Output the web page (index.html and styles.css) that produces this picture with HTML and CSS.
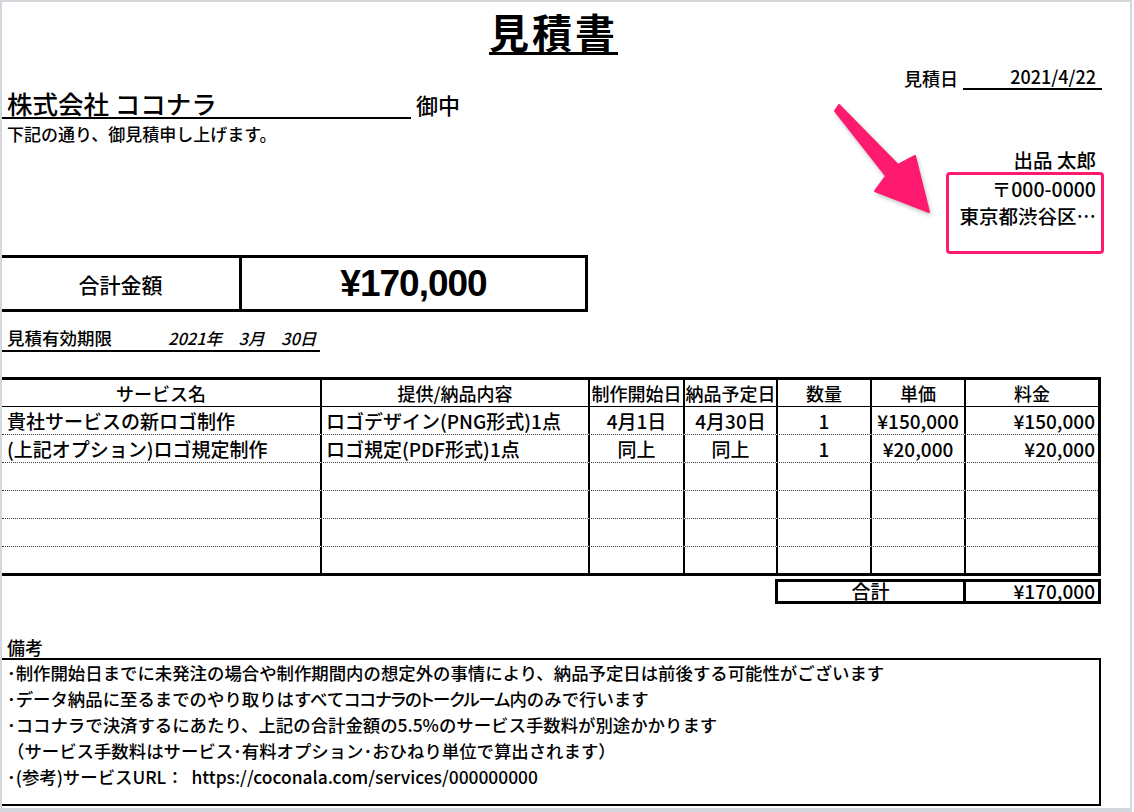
FILE: index.html
```html
<!DOCTYPE html>
<html lang="ja">
<head>
<meta charset="utf-8">
<title>見積書</title>
<link rel="stylesheet" href="styles.css">
</head>
<body>
<div class="frame">
  <div class="doc">
    <div class="title-row"><h1 class="title">見積書</h1></div>

    <div class="head">
      <div class="client">
        <div class="client-line"><span class="client-name">株式会社 ココナラ</span><span class="onchu">御中</span></div>
        <p class="lead">下記の通り、御見積申し上げます。</p>
      </div>
      <div class="issuer">
        <div class="date-row"><span class="date-label">見積日</span><span class="date-val">2021/4/22</span></div>
        <div class="issuer-name">出品 太郎</div>
        <div class="highlight">
          <div>〒000-0000</div>
          <div>東京都渋谷区…</div>
        </div>
      </div>
    </div>

    <div class="total-box">
      <div class="total-label">合計金額</div>
      <div class="total-amount">¥170,000</div>
    </div>

    <div class="valid"><span class="valid-label">見積有効期限</span><span class="valid-date">2021年　3月　30日</span></div>

    <div class="items">
      <div class="row head-row">
        <div class="cell">サービス名</div>
        <div class="cell">提供/納品内容</div>
        <div class="cell">制作開始日</div>
        <div class="cell">納品予定日</div>
        <div class="cell">数量</div>
        <div class="cell">単価</div>
        <div class="cell">料金</div>
      </div>
      <div class="row">
        <div class="cell l1">貴社サービスの新ロゴ制作</div>
        <div class="cell l2">ロゴデザイン(PNG形式)1点</div>
        <div class="cell c">4月1日</div>
        <div class="cell c">4月30日</div>
        <div class="cell c">1</div>
        <div class="cell c">¥150,000</div>
        <div class="cell r">¥150,000</div>
      </div>
      <div class="row">
        <div class="cell l1">(上記オプション)ロゴ規定制作</div>
        <div class="cell l2">ロゴ規定(PDF形式)1点</div>
        <div class="cell c">同上</div>
        <div class="cell c">同上</div>
        <div class="cell c">1</div>
        <div class="cell c">¥20,000</div>
        <div class="cell r">¥20,000</div>
      </div>
      <div class="row"><div class="cell"></div><div class="cell"></div><div class="cell"></div><div class="cell"></div><div class="cell"></div><div class="cell"></div><div class="cell"></div></div>
      <div class="row"><div class="cell"></div><div class="cell"></div><div class="cell"></div><div class="cell"></div><div class="cell"></div><div class="cell"></div><div class="cell"></div></div>
      <div class="row"><div class="cell"></div><div class="cell"></div><div class="cell"></div><div class="cell"></div><div class="cell"></div><div class="cell"></div><div class="cell"></div></div>
      <div class="row last"><div class="cell"></div><div class="cell"></div><div class="cell"></div><div class="cell"></div><div class="cell"></div><div class="cell"></div><div class="cell"></div></div>
    </div>

    <div class="subtotal">
      <div class="sub-label">合計</div>
      <div class="sub-amount">¥170,000</div>
    </div>

    <div class="notes-title">備考</div>
    <div class="notes">
      <p>･制作開始日までに未発注の場合や制作期間内の想定外の事情により、納品予定日は前後する可能性がございます</p>
      <p>･データ納品に至るまでのやり取りはすべて<span class="tight">ココナラのトークルーム</span>内のみで行います</p>
      <p>･ココナラで決済するにあたり、上記の合計金額の5.5%のサービス手数料が別途かかります</p>
      <p>（サービス手数料はサービス･有料オプション･おひねり単位で算出されます）</p>
      <p>･(参考)サービスURL：  https://coconala.com/services/000000000</p>
    </div>
  </div>

  <svg class="arrow" width="1134" height="812" viewBox="0 0 1134 812" aria-hidden="true">
    <polygon points="839,105 898,165 915,156 929,212 875,191 886,176 835,111" fill="#fd1a6f" stroke="#fd1a6f" stroke-width="2" stroke-linejoin="round"/>
  </svg>
</div>
</body>
</html>
```

FILE: styles.css
```css
* { box-sizing: border-box; }

html, body {
  margin: 0;
  padding: 0;
  background: #ffffff;
}

body {
  font-family: "Noto Sans CJK JP", "Noto Sans", sans-serif;
  font-weight: 500;
  color: #000;
}

.frame {
  position: relative;
  width: 1132px;
  height: 812px;
  border-style: solid;
  border-color: #d4d8dc;
  border-width: 2px 2px 4px 2px;
  overflow: hidden;
  background: #fff;
}

.doc {
  width: 1100px;
}

/* title */
.title-row {
  height: 62px;
  text-align: center;
}
.title {
  margin: 0;
  padding-left: 3px;
  font-size: 40px;
  line-height: 58px;
  letter-spacing: 3px;
  font-weight: 700;
  text-decoration: underline;
  text-decoration-thickness: 3px;
  text-underline-offset: 4px;
}

/* header block */
.head {
  display: flex;
  justify-content: space-between;
}
.client {
  padding-top: 24px;
}
.client-line {
  display: flex;
  align-items: baseline;
}
.client-name {
  display: block;
  width: 409px;
  padding-left: 5px;
  font-size: 25.5px;
  line-height: 28px;
  border-bottom: 2px solid #000;
}
.onchu {
  margin-left: 5px;
  font-size: 22px;
}
.lead {
  margin: 4px 0 0;
  padding-left: 5px;
  font-size: 17px;
  line-height: 20px;
}

.issuer {
  display: flex;
  flex-direction: column;
  align-items: flex-end;
}
.date-row {
  display: flex;
  align-items: flex-end;
  font-size: 18px;
  line-height: 24px;
}
.date-label {
  margin-right: 5px;
}
.date-val {
  width: 139px;
  padding-right: 6px;
  text-align: right;
  border-bottom: 2px solid #000;
}
.issuer-name {
  margin-top: 58px;
  padding-right: 6px;
  font-size: 19.5px;
  line-height: 24px;
}
.highlight {
  width: 158px;
  margin-right: -2px;
  padding: 0 5px 22px 0;
  border: 3px solid #fd1a6f;
  border-radius: 4px;
  font-size: 19.5px;
  line-height: 27px;
  text-align: right;
}

/* total amount */
.total-box {
  display: flex;
  width: 586px;
  height: 57px;
  margin-top: 1px;
  border-style: solid;
  border-color: #000;
  border-width: 3px 3px 3px 0;
}
.total-label {
  width: 240px;
  border-right: 3px solid #000;
  display: flex;
  align-items: center;
  justify-content: center;
  font-size: 21px;
}
.total-amount {
  flex: 1;
  display: flex;
  align-items: center;
  justify-content: center;
  font-family: "Liberation Sans", "Noto Sans CJK JP", sans-serif;
  font-weight: 700;
  font-size: 37px;
  letter-spacing: -1px;
}

/* validity */
.valid {
  width: 318px;
  margin-top: 14px;
  padding-left: 5px;
  font-size: 17.5px;
  line-height: 24px;
  border-bottom: 2px solid #000;
}
.valid-date {
  margin-left: 56px;
  font-style: italic;
  font-size: 16.5px;
}

/* items table */
.items {
  width: 1099px;
  margin-top: 25px;
  border-style: solid;
  border-color: #000;
  border-width: 3px 3px 3px 0;
  font-size: 19px;
}
.row {
  display: grid;
  grid-template-columns: 320px 268px 95px 93px 94px 94px 132px;
  height: 28px;
  border-bottom: 1px dotted #444;
  line-height: 27px;
}
.row.head-row {
  height: 27px;
  line-height: 26px;
  border-bottom: 1px solid #000;
  text-align: center;
  font-size: 18px;
}
.row.last {
  height: 26px;
  border-bottom: none;
}
.cell {
  border-right: 2px solid #000;
  white-space: nowrap;
  overflow: hidden;
}
.cell:last-child {
  border-right: none;
}
.cell.l1 { padding-left: 5px; }
.cell.l2 { padding-left: 4px; }
.cell.c { text-align: center; }
.cell.r { text-align: right; padding-right: 3px; }

/* subtotal */
.subtotal {
  display: flex;
  width: 326px;
  height: 25px;
  margin: 3px 0 0 773px;
  border: 3px solid #000;
  font-size: 19px;
  line-height: 18px;
}
.sub-label {
  flex: 1;
  text-align: center;
}
.sub-amount {
  width: 135px;
  border-left: 3px solid #000;
  text-align: right;
  padding-right: 3px;
}

/* notes */
.notes-title {
  margin-top: 32px;
  padding-left: 5px;
  font-size: 18px;
  line-height: 22px;
}
.notes {
  width: 1099px;
  padding: 0 0 14px 5px;
  border-style: solid;
  border-color: #000;
  border-width: 2px 2px 2px 0;
  font-size: 17.4px;
  line-height: 26px;
}
.notes p {
  margin: 0;
  white-space: pre;
}
.tight {
  font-feature-settings: "palt";
  letter-spacing: -1px;
}

/* annotation arrow */
.arrow {
  position: absolute;
  left: -2px;
  top: -2px;
  pointer-events: none;
  filter: drop-shadow(1px 2px 2px rgba(0, 0, 0, 0.25));
}
```
